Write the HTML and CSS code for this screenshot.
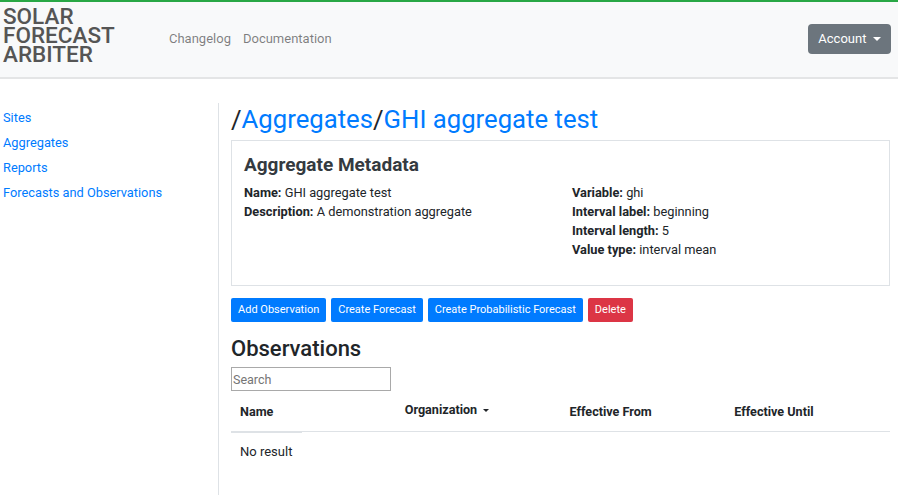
FILE: index.html
```html
<!DOCTYPE html>
<html>
<head>
<meta charset="utf-8">
<link rel="stylesheet" href="styles.css">
</head>
<body>
<header class="navbar">
  <a class="brand" href="#">SOLAR<br>FORECAST<br>ARBITER</a>
  <nav class="nav-links">
    <a href="#">Changelog</a>
    <a href="#">Documentation</a>
  </nav>
  <button class="btn-account">Account <span class="caret"></span></button>
</header>
<div class="layout">
  <aside class="sidebar">
    <a href="#">Sites</a>
    <a href="#">Aggregates</a>
    <a href="#">Reports</a>
    <a href="#">Forecasts and Observations</a>
  </aside>
  <main class="content">
    <h1 class="crumbs">/<a href="#">Aggregates</a>/<a href="#">GHI aggregate test</a></h1>
    <section class="card">
      <h3 class="card-title">Aggregate Metadata</h3>
      <div class="meta">
        <ul>
          <li><b>Name:</b> GHI aggregate test</li>
          <li><b>Description:</b> A demonstration aggregate</li>
        </ul>
        <ul>
          <li><b>Variable:</b> ghi</li>
          <li><b>Interval label:</b> beginning</li>
          <li><b>Interval length:</b> 5</li>
          <li><b>Value type:</b> interval mean</li>
        </ul>
      </div>
    </section>
    <div class="actions">
      <a class="btn btn-primary" href="#">Add Observation</a>
      <a class="btn btn-primary" href="#">Create Forecast</a>
      <a class="btn btn-primary" href="#">Create Probabilistic Forecast</a>
      <a class="btn btn-danger" href="#">Delete</a>
    </div>
    <h2 class="section-title">Observations</h2>
    <input class="search" type="text" placeholder="Search">
    <div class="table">
      <div class="thead">
        <div class="th">Name</div>
        <div class="th th-org">Organization <span class="caret small"></span></div>
        <div class="th">Effective From</div>
        <div class="th">Effective Until</div>
      </div>
      <div class="tbody">
        <div class="td">No result</div>
      </div>
    </div>
  </main>
</div>
</body>
</html>
```
FILE: styles.css
```css
* { box-sizing: border-box; }
html, body { margin: 0; padding: 0; }
body {
  font-family: Roboto, "Liberation Sans", Arial, sans-serif;
  font-size: 13px;
  color: #212529;
  background: #fff;
}
a { color: #007bff; text-decoration: none; }

.navbar {
  height: 79px;
  border-top: 2px solid #28a745;
  background: #f8f9fa;
  border-bottom: 2px solid #e4e5e6;
  display: flex;
  align-items: center;
  padding: 0 7px 0 3px;
}
.brand {
  color: #555;
  font-size: 22.5px;
  line-height: 19px;
  font-weight: 500;
  align-self: flex-start;
  margin-top: 5px;
  width: 166px;
}
.nav-links { display: flex; gap: 12px; flex: 1; margin-top: -2px; }
.nav-links a { color: rgba(0,0,0,.5); font-size: 13px; }
.btn-account {
  background: #6c757d;
  color: #fff;
  border: 0;
  border-radius: 4px;
  font-family: inherit;
  font-size: 13px;
  height: 30px;
  width: 83px;
  padding: 0 10px;
  margin-top: -2px;
}
.caret {
  display: inline-block;
  width: 0; height: 0;
  border-left: 4px solid transparent;
  border-right: 4px solid transparent;
  border-top: 4px solid currentColor;
  vertical-align: 2px;
  margin-left: 3px;
}
.caret.small {
  border-left-width: 3px; border-right-width: 3px; border-top-width: 3px;
}

.layout { display: flex; }
.sidebar {
  width: 218px;
  display: flex;
  flex-direction: column;
  padding: 31px 0 0 3px;
  gap: 9px;
}
.sidebar a { line-height: 16px; font-size: 12.8px; }
.content {
  flex: 1;
  border-left: 1px solid #dee2e6;
  margin-top: 24px;
  padding: 0 8px 0 12px;
  min-height: 392px;
}
.crumbs {
  font-size: 25.7px;
  font-weight: 400;
  margin: 0;
  line-height: 32px;
  color: #212529;
}
.card {
  border: 1px solid #dee2e6;
  margin-top: 5px;
  height: 146px;
  padding: 12px 12px;
}
.card-title {
  font-size: 19px;
  font-weight: 700;
  margin: 0 0 6px;
  line-height: 24px;
  color: #343a40;
}
.meta { display: grid; grid-template-columns: 328px 1fr; }
.meta ul { list-style: none; margin: 0; padding: 0; }
.meta li { font-size: 12.8px; line-height: 19px; }
.meta b { font-weight: 700; }

.actions { display: flex; gap: 5px; margin-top: 12px; }
.btn {
  display: inline-block;
  font-size: 11px;
  line-height: 23px;
  height: 24px;
  padding: 0 7px;
  border-radius: 2px;
  color: #fff;
}
.btn-primary { background: #007bff; }
.btn-danger { background: #dc3545; padding: 0 7px; }

.section-title {
  font-size: 22px;
  font-weight: 500;
  margin: 14px 0 5px;
  line-height: 26px;
}
.search {
  display: block;
  width: 160px;
  height: 24px;
  border: 1px solid #a9a9a9;
  font-family: inherit;
  font-size: 12.5px;
  padding: 1px 1px;
  margin: 0;
}
.search::placeholder { color: #757575; }

.table { margin-top: 0; }
.thead {
  display: grid;
  grid-template-columns: repeat(4, 1fr);
  height: 41px;
  align-items: center;
  border-bottom: 1px solid #dee2e6;
  position: relative;
}
.thead::after {
  content: "";
  position: absolute;
  left: 0; bottom: -2px;
  width: 71px; height: 2px;
  background: #dee2e6;
}
.th { font-size: 12.6px; font-weight: 700; padding-left: 9px; }
.th-org { margin-top: -3px; }
.td { font-size: 13px; padding: 12px 9px; }
```
